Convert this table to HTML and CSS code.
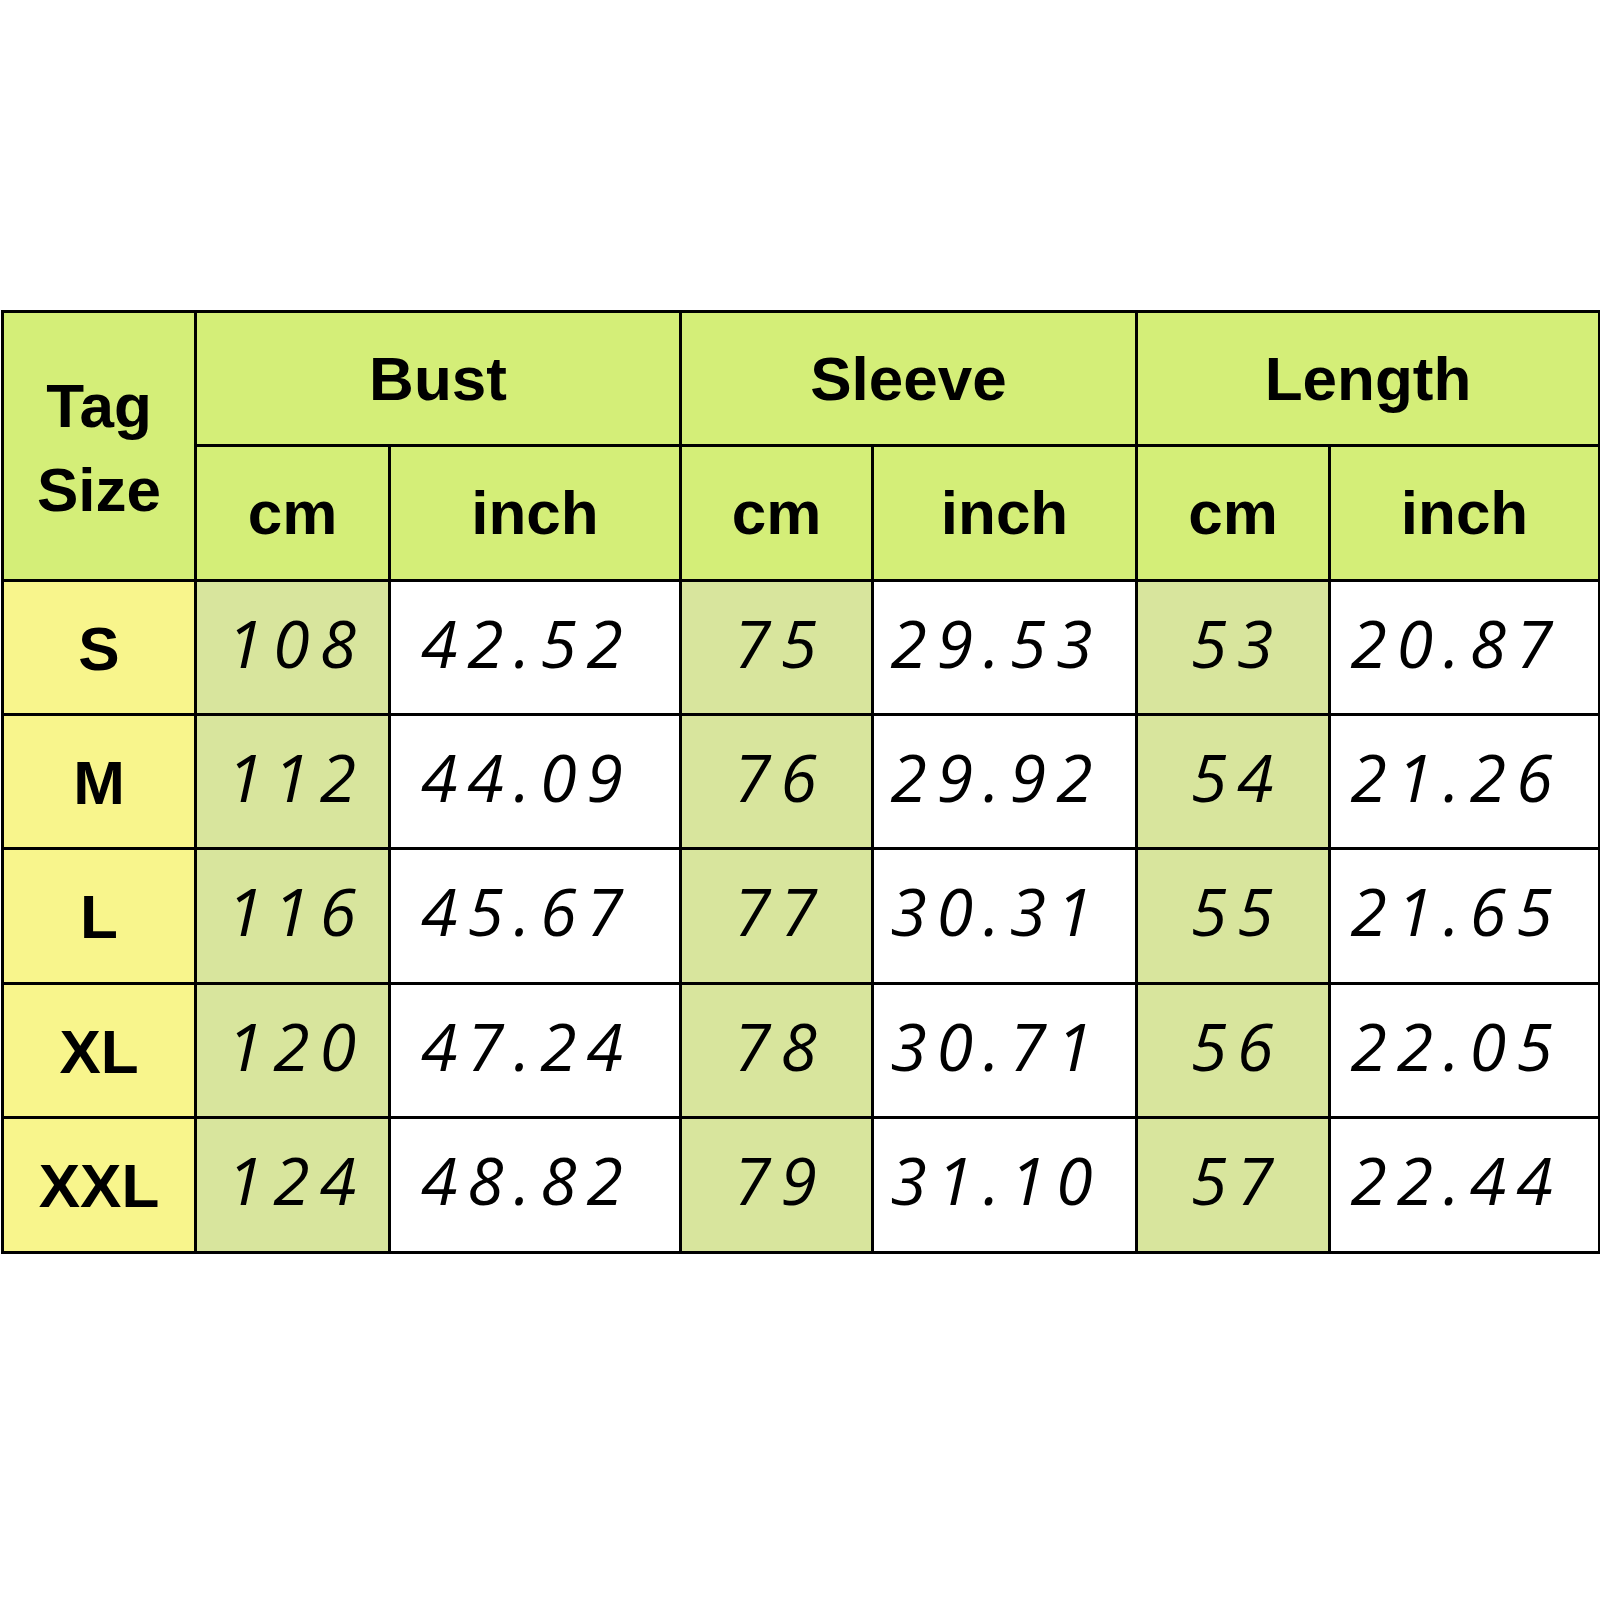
FILE: index.html
```html
<!DOCTYPE html>
<html>
<head>
<meta charset="utf-8">
<link rel="stylesheet" href="styles.css">
</head>
<body>
<div class="page">
<table class="chart">
  <colgroup>
    <col class="c-size"><col class="c-cm1"><col class="c-in1"><col class="c-cm2"><col class="c-in2"><col class="c-cm3"><col class="c-in3">
  </colgroup>
  <thead>
    <tr class="r-a">
      <th rowspan="2" class="tag">Tag<br>Size</th>
      <th colspan="2">Bust</th>
      <th colspan="2">Sleeve</th>
      <th colspan="2">Length</th>
    </tr>
    <tr class="r-b">
      <th>cm</th><th>inch</th><th>cm</th><th>inch</th><th>cm</th><th>inch</th>
    </tr>
  </thead>
  <tbody>
    <tr class="r-a"><th class="size">S</th><td class="cm">108</td><td class="in">42.52</td><td class="cm">75</td><td class="in">29.53</td><td class="cm">53</td><td class="in">20.87</td></tr>
    <tr class="r-a"><th class="size">M</th><td class="cm">112</td><td class="in">44.09</td><td class="cm">76</td><td class="in">29.92</td><td class="cm">54</td><td class="in">21.26</td></tr>
    <tr class="r-b"><th class="size">L</th><td class="cm">116</td><td class="in">45.67</td><td class="cm">77</td><td class="in">30.31</td><td class="cm">55</td><td class="in">21.65</td></tr>
    <tr class="r-a"><th class="size">XL</th><td class="cm">120</td><td class="in">47.24</td><td class="cm">78</td><td class="in">30.71</td><td class="cm">56</td><td class="in">22.05</td></tr>
    <tr class="r-b"><th class="size">XXL</th><td class="cm">124</td><td class="in">48.82</td><td class="cm">79</td><td class="in">31.10</td><td class="cm">57</td><td class="in">22.44</td></tr>
  </tbody>
</table>
</div>
</body>
</html>
```
FILE: styles.css
```css
html, body {
  margin: 0;
  padding: 0;
  background: #ffffff;
}
.page {
  padding-top: 310px;
  padding-left: 1px;
}
.chart {
  border-collapse: collapse;
  table-layout: fixed;
  width: 1599px;
  border: 3px solid #000;
}
.c-size { width: 193px; }
.c-cm1 { width: 194px; }
.c-in1 { width: 291px; }
.c-cm2 { width: 192px; }
.c-in2 { width: 264px; }
.c-cm3 { width: 193px; }
.c-in3 { width: 270px; }
.chart th, .chart td {
  border: 3px solid #000;
  padding: 0;
  text-align: center;
  vertical-align: middle;
}
.r-a { height: 134px; }
.r-b { height: 135px; }
.chart thead th {
  background: #d4ee78;
  font-family: "Liberation Sans", Arial, sans-serif;
  font-weight: bold;
  font-size: 62px;
  color: #000;
  line-height: 1;
}
.chart thead th.tag {
  line-height: 84px;
  padding-top: 4px;
}
.chart th.size {
  background: #f8f58c;
  font-family: "Liberation Sans", Arial, sans-serif;
  font-weight: bold;
  font-size: 62px;
  line-height: 1;
  color: #000;
  padding-top: 2px;
}
.chart td {
  font-family: "Open Sans", "Liberation Sans", sans-serif;
  font-weight: 380;
  font-style: italic;
  font-size: 66px;
  letter-spacing: 10px;
  line-height: 1;
  color: #000;
  padding-bottom: 12px;
  padding-left: 8px;
}
.chart td.cm {
  background: #d8e59d;
}
.chart td.in {
  background: #ffffff;
  padding-left: 0;
  padding-right: 16px;
}
```
